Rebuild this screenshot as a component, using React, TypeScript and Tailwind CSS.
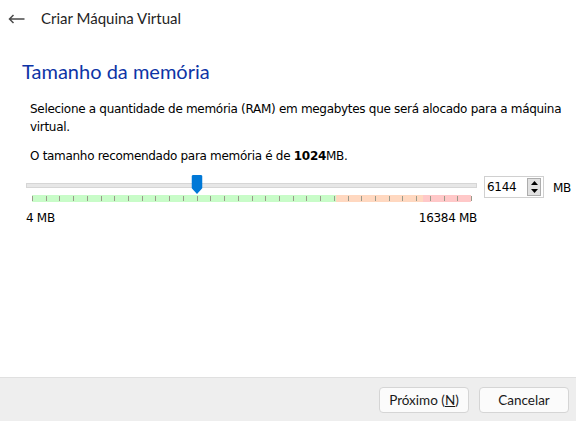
import { useState } from "react";

const TOTAL = 16384;
const TICKS = 33; // a cada 512 MB

export default function App() {
    const [memory, setMemory] = useState(6144);

    // posição do marcador em px dentro da faixa (32 → 471)
    const thumbX = 6 + (memory / TOTAL) * 439;

    return (
        <div className="flex h-[421px] w-[576px] flex-col bg-white font-['Liberation_Sans',sans-serif] text-[#1a1a1a]">
            {/* cabeçalho */}
            <div className="flex h-[37px] items-center">
                <button className="ml-[7px] flex h-[18px] w-[18px] items-center justify-center text-[#4a4a4a]">
                    <svg width="17" height="10" viewBox="0 0 17 10" fill="none" stroke="currentColor" strokeWidth="1.5">
                        <path d="M16.5 5H1.5M5.5 1L1.5 5l4 4" />
                    </svg>
                </button>
                <span className="ml-[16px] font-['Lato',sans-serif] text-[15px] text-[#1f1f1f]">
                    Criar Máquina Virtual
                </span>
            </div>

            <div className="flex flex-1 flex-col">
                <h1 className="ml-[22px] mt-[20px] font-['Lato',sans-serif] text-[20px] leading-[28px] text-[#0d34a6]">
                    Tamanho da memória
                </h1>

                <div className="ml-[30px] mt-[15px] w-[540px] font-['DejaVu_Sans',sans-serif] text-[12px] leading-[18px] text-black">
                    <p className="tracking-[-0.3px]">
                        Selecione a quantidade de memória (RAM) em megabytes que será alocado para a máquina virtual.
                    </p>
                    <p className="mt-[11px] tracking-[-0.3px]">
                        O tamanho recomendado para memória é de <b>1024</b>MB.
                    </p>
                </div>

                {/* slider + spinbox */}
                <div className="mt-[10px] flex">
                    <div className="ml-[26px] w-[451px]">
                        <div className="relative h-[20px]">
                            <div className="absolute left-0 right-0 top-[8px] h-[5px] border border-[#d6d6d6] bg-[#e7e7e7]" />
                            <div
                                className="absolute top-0 h-[19px] w-[11px] -translate-x-1/2"
                                style={{ left: thumbX }}
                            >
                                <svg width="11" height="19" viewBox="0 0 11 19">
                                    <path d="M0 1.5Q0 0 1.5 0h8Q11 0 11 1.5V13l-5.5 6L0 13z" fill="#0078d7" />
                                </svg>
                            </div>
                        </div>
                        <div className="ml-[6px] flex h-[7px] w-[439px]">
                            <div className="w-[304px] bg-[#c8fcc8]" />
                            <div className="w-[87px] bg-[#ffd8c0]" />
                            <div className="w-[48px] bg-[#ffc8c8]" />
                        </div>
                        <div className="relative -mt-[7px] ml-[6px] h-[7px] w-[439px]">
                            {Array.from({ length: TICKS }).map((_, i) => (
                                <div
                                    key={i}
                                    className="absolute top-[1px] h-[5px] w-px bg-[#9a9a8a]"
                                    style={{ left: Math.round((i * 439) / (TICKS - 1)) }}
                                />
                            ))}
                        </div>
                        <div className="mt-[7px] flex justify-between font-['DejaVu_Sans',sans-serif] text-[12px] tracking-[-0.3px] text-black">
                            <span>4 MB</span>
                            <span>16384 MB</span>
                        </div>
                    </div>

                    <div className="ml-[7px] mt-[1px] flex h-[22px] w-[60px] items-stretch border border-[#d0d0d0] bg-white">
                        <input
                            className="w-[42px] pl-[2px] font-['DejaVu_Sans',sans-serif] text-[12px] tracking-[-0.3px] text-black outline-none"
                            value={memory}
                            onChange={(e) => {
                                const v = parseInt(e.target.value);
                                if (!isNaN(v)) setMemory(Math.min(TOTAL, Math.max(4, v)));
                            }}
                        />
                        <div className="my-[1px] mr-[1px] flex w-[14px] flex-col border border-[#adadad] bg-[#e1e1e1]">
                            <button
                                className="flex flex-1 items-center justify-center"
                                onClick={() => setMemory(Math.min(TOTAL, memory + 1))}
                            >
                                <svg width="7" height="4" viewBox="0 0 7 4"><path d="M3.5 0L7 4H0z" fill="#000" /></svg>
                            </button>
                            <button
                                className="flex flex-1 items-center justify-center"
                                onClick={() => setMemory(Math.max(4, memory - 1))}
                            >
                                <svg width="7" height="4" viewBox="0 0 7 4"><path d="M0 0h7L3.5 4z" fill="#000" /></svg>
                            </button>
                        </div>
                    </div>
                    <span className="ml-[9px] mt-[4px] font-['DejaVu_Sans',sans-serif] text-[12px] tracking-[-0.3px] text-black">
                        MB
                    </span>
                </div>
            </div>

            {/* rodapé */}
            <div className="flex h-[44px] items-start justify-end gap-[10px] border-t border-[#e0e0e0] bg-[#eeeeee] pr-[7px] pt-[9px]">
                <button className="h-[26px] w-[90px] rounded-[4px] border border-[#d5d5d5] bg-[#fbfbfb] font-['Lato',sans-serif] text-[13.5px] text-[#1a1a1a]">
                    Próximo (<u>N</u>)
                </button>
                <button className="h-[26px] w-[90px] rounded-[4px] border border-[#d5d5d5] bg-[#fbfbfb] font-['Lato',sans-serif] text-[13.5px] text-[#1a1a1a]">
                    Cancelar
                </button>
            </div>
        </div>
    );
}
